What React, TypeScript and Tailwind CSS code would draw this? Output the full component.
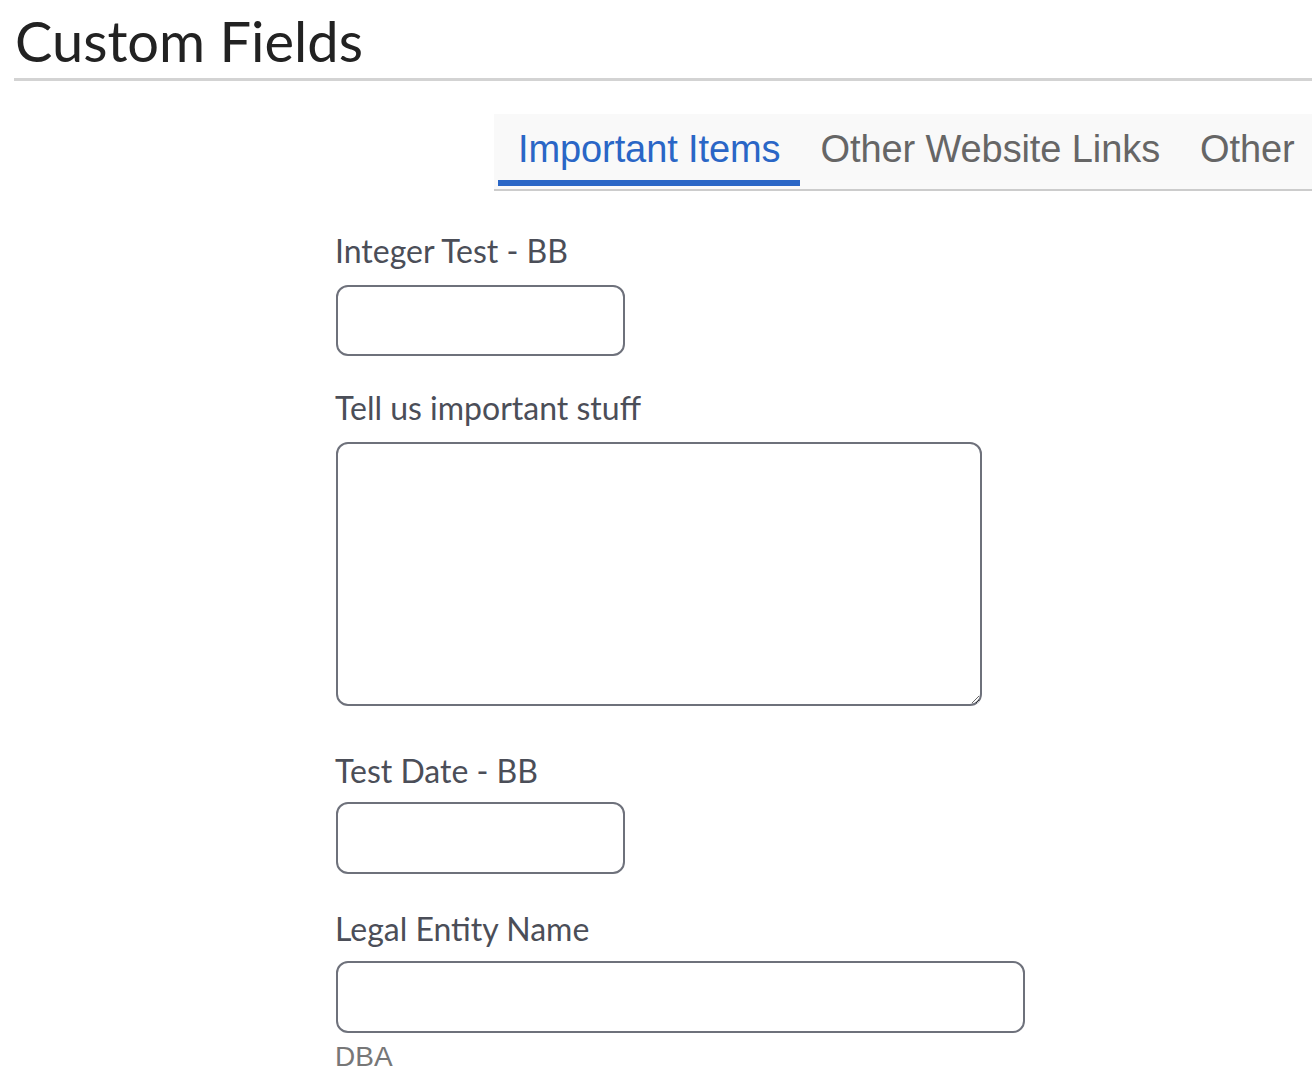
import React from "react";

export default function App() {
  const labelCls =
    "text-[32px] leading-[40px] text-[#4b4e58] [font-family:Lato,'Noto_Sans',sans-serif]";
  const inputCls =
    "block border-2 border-[#6e717b] rounded-[12px] bg-white outline-none";
  const tabCls =
    "shrink-0 whitespace-nowrap px-[20px] h-[68px] mb-[3px] flex items-center border-b-[6px] text-[38px] tracking-[-0.1px]";
  return (
    <div className="w-[1312px] h-[1084px] bg-white overflow-hidden [font-family:Lato,sans-serif]">
      <div className="pl-[14px]">
        <h1 className="pl-[1px] pt-[8px] text-[56px] leading-[66px] text-[#222222] [font-family:Lato,sans-serif] font-normal">
          Custom Fields
        </h1>
        <div className="mt-[4px] h-[3px] bg-[#d3d3d3]" />
      </div>

      <div className="ml-[494px] mt-[33px] bg-[#f9f9f9] border-b-2 border-[#cccccc] h-[77px] flex items-end overflow-hidden [font-family:'Liberation_Sans',Arial,sans-serif]">
        <div className={tabCls + " ml-[4px] border-[#2a66c6] text-[#2a66c6]"}>
          Important Items
        </div>
        <div className={tabCls + " border-transparent text-[#666666]"}>
          Other Website Links
        </div>
        <div className={tabCls + " border-transparent text-[#666666]"}>
          Other
        </div>
      </div>

      <div className="pl-[335px] flex flex-col">
        <div className={"mt-[40px] " + labelCls}>Integer Test - BB</div>
        <input className={"mt-[14px] ml-[1px] w-[289px] h-[71px] " + inputCls} />

        <div className={"mt-[32px] " + labelCls}>Tell us important stuff</div>
        <textarea className={"mt-[14px] ml-[1px] w-[646px] h-[264px] resize " + inputCls} />

        <div className={"mt-[45px] " + labelCls}>Test Date - BB</div>
        <input className={"mt-[11px] ml-[1px] w-[289px] h-[72px] " + inputCls} />

        <div className={"mt-[35px] " + labelCls}>Legal Entity Name</div>
        <input className={"mt-[12px] ml-[1px] w-[689px] h-[72px] " + inputCls} />

        <div className="mt-[7px] text-[28px] leading-[34px] text-[#777777] [font-family:'Liberation_Sans',Arial,sans-serif]">
          DBA
        </div>
      </div>
    </div>
  );
}
